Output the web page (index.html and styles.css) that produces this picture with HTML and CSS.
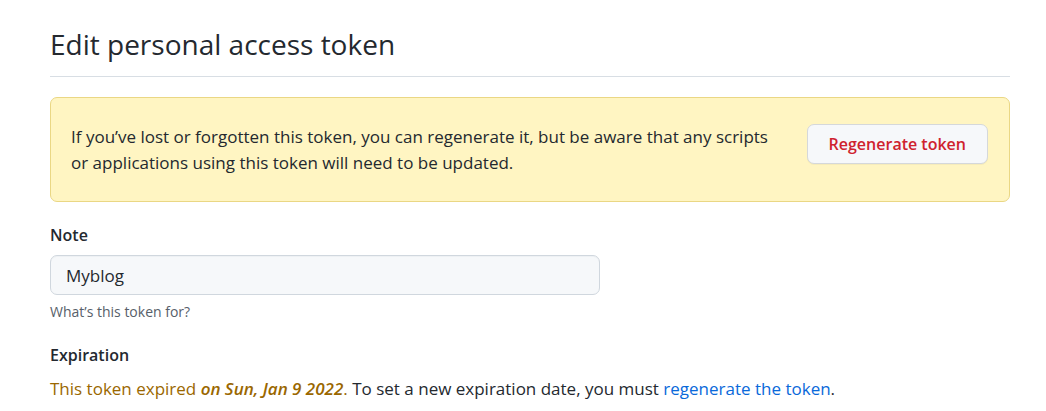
FILE: index.html
```html
<!DOCTYPE html>
<html lang="en">
<head>
<meta charset="utf-8">
<meta name="viewport" content="width=device-width, initial-scale=1">
<title>Edit personal access token</title>
<link rel="stylesheet" href="styles.css">
</head>
<body>
<main class="page">
  <h1 class="title">Edit personal access token</h1>
  <section class="flash">
    <p class="flash-text">If you’ve lost or forgotten this token, you can regenerate it, but be aware that any scripts or applications using this token will need to be updated.</p>
    <button class="btn-danger" type="button">Regenerate token</button>
  </section>
  <form class="form">
    <label class="label" for="note">Note</label>
    <input class="input" id="note" type="text" value="Myblog">
    <p class="hint">What’s this token for?</p>
    <h2 class="label">Expiration</h2>
    <p class="expiry"><span class="expired">This token expired <em class="date">on Sun, Jan 9 2022</em>.</span> To set a new expiration date, you must <a class="link" href="#regenerate">regenerate the token</a>.</p>
  </form>
</main>
</body>
</html>
```

FILE: styles.css
```css
* {
  box-sizing: border-box;
}

body {
  margin: 0;
  background: #fff;
  color: #24292f;
  font-family: "Segoe UI", "Open Sans", "Noto Sans", sans-serif;
  font-size: 17px;
  line-height: 26px;
}

.page {
  padding: 24px 36px 0 50px;
}

.title {
  margin: 0 0 20px;
  padding-bottom: 12px;
  border-bottom: 1px solid #d8dee4;
  font-size: 28px;
  font-weight: 400;
  line-height: 40px;
}

.flash {
  display: flex;
  align-items: flex-start;
  justify-content: space-between;
  gap: 20px;
  padding: 26px 21px 25px 20px;
  border: 1px solid #ead784;
  border-radius: 7px;
  background: #fff5c2;
}

.flash-text {
  max-width: 710px;
  margin: 0;
}

.btn-danger {
  flex: none;
  height: 40px;
  padding: 0 21px;
  border: 1px solid #d5d8da;
  border-radius: 7px;
  background: #f6f8fa;
  box-shadow: 0 1px 0 rgba(27, 31, 36, 0.04);
  color: #cf222e;
  font: inherit;
  font-size: 16px;
  font-weight: 600;
}

.form {
  margin-top: 20px;
}

.label {
  display: block;
  margin: 0;
  font-size: 16px;
  font-weight: 600;
  line-height: 26px;
}

.input {
  display: block;
  width: 550px;
  max-width: 100%;
  height: 40px;
  margin-top: 7px;
  padding: 0 15px;
  border: 1px solid #d0d7de;
  border-radius: 7px;
  background: #f6f8fa;
  box-shadow: inset 0 1px 0 rgba(208, 215, 222, 0.2);
  color: inherit;
  font: inherit;
}

.hint {
  margin: 5px 0 18px;
  color: #57606a;
  font-size: 14px;
  line-height: 24px;
}

.expiry {
  margin: 8px 0 0;
}

.expired {
  color: #9a6700;
}

.date {
  font-weight: 600;
}

.link {
  color: #0969da;
  text-decoration: none;
}
```
